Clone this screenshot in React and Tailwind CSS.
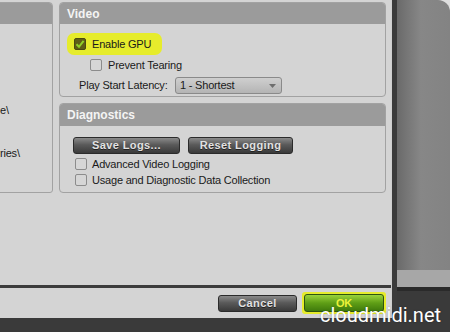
import React from "react";

const Checkbox = ({ checked }) => (
  <div
    className={
      checked
        ? "w-[12px] h-[12px] rounded-[2px] border border-[#4a4a12] bg-[#5e5e16] flex items-center justify-center shrink-0"
        : "w-[12px] h-[12px] rounded-[2px] border border-[#8c8c8c] bg-[#d6d6d6] shrink-0"
    }
  >
    {checked && (
      <svg width="10" height="10" viewBox="0 0 10 10">
        <path d="M1.5 5.2 L4 7.8 L8.6 1.8" fill="none" stroke="#8fd028" strokeWidth="2" />
      </svg>
    )}
  </div>
);

const DarkButton = ({ label, width }) => (
  <button
    className={`${width} h-[17px] rounded-[3px] border border-[#2b2b2b] bg-[linear-gradient(to_bottom,#8a8a8a,#5a5a5a_45%,#3a3a3a)] text-[#e2e2e2] text-[11px] font-bold tracking-[0.4px] leading-none flex items-center justify-center [text-shadow:0_1px_0_#222]`}
  >
    {label}
  </button>
);

const App = () => {
  return (
    <div className="relative w-[450px] h-[332px] overflow-hidden bg-[#3a3a3a] font-['Liberation_Sans',Arial,sans-serif] text-[11px] tracking-[-0.2px] text-[#1a1a1a]">
      <div className="flex h-[318px]">
        {/* Dialog */}
        <div className="w-[391px] flex flex-col bg-[#d4d4d4]">
          <div className="h-[285px] flex pt-[2px] overflow-hidden">
            {/* Left panel (cut off) */}
            <div className="-ml-[10px] w-[63px] h-[191px] shrink-0 border border-[#a2a2a2] rounded-tr-[4px] rounded-br-[3px] overflow-hidden flex flex-col">
              <div className="h-[21px] bg-[#9b9b9b]" />
              <div className="flex flex-col pl-[9px]">
                <span className="mt-[78px] leading-[16px] whitespace-nowrap">e\</span>
                <span className="mt-[27px] leading-[16px] whitespace-nowrap">ries\</span>
              </div>
            </div>

            {/* Right column */}
            <div className="ml-[6px] w-[327px] flex flex-col gap-[6px]">
              {/* Video */}
              <div className="h-[95px] border border-[#a2a2a2] rounded-[4px] overflow-hidden flex flex-col">
                <div className="h-[21px] bg-[#9b9b9b] flex items-center pl-[7px] text-[12px] font-bold tracking-normal text-[#f4f4f4]">
                  Video
                </div>
                <div className="flex flex-col">
                  <div className="ml-[7px] mt-[9px] w-[95px] h-[22px] rounded-[7px] bg-[#e6ec2c] flex items-center pl-[7px] gap-[6px]">
                    <Checkbox checked />
                    <span>Enable GPU</span>
                  </div>
                  <div className="mt-[2px] h-[16px] ml-[30px] flex items-center gap-[6px]">
                    <Checkbox />
                    <span>Prevent Tearing</span>
                  </div>
                  <div className="mt-[4px] h-[17px] ml-[19px] flex items-center">
                    <span className="w-[96px]">Play Start Latency:</span>
                    <div className="w-[107px] h-[17px] rounded-[3px] border border-[#8a8a8a] bg-[linear-gradient(to_bottom,#cfcfcf,#b4b4b4)] flex items-center justify-between pl-[4px] pr-[5px]">
                      <span>1 - Shortest</span>
                      <svg width="7" height="4" viewBox="0 0 7 4">
                        <path d="M0 0 H7 L3.5 4 Z" fill="#6e6e6e" />
                      </svg>
                    </div>
                  </div>
                </div>
              </div>

              {/* Diagnostics */}
              <div className="h-[90px] border border-[#a2a2a2] rounded-[4px] overflow-hidden flex flex-col">
                <div className="h-[22px] bg-[#9b9b9b] flex items-center pl-[7px] text-[12px] font-bold tracking-normal text-[#f4f4f4]">
                  Diagnostics
                </div>
                <div className="flex flex-col pt-[11px]">
                  <div className="flex gap-[8px] ml-[13px]">
                    <DarkButton label="Save Logs..." width="w-[107px]" />
                    <DarkButton label="Reset Logging" width="w-[105px]" />
                  </div>
                  <div className="mt-[2px] h-[16px] ml-[15px] flex items-center gap-[5px]">
                    <Checkbox />
                    <span>Advanced Video Logging</span>
                  </div>
                  <div className="h-[16px] ml-[15px] flex items-center gap-[5px]">
                    <Checkbox />
                    <span>Usage and Diagnostic Data Collection</span>
                  </div>
                </div>
              </div>
            </div>
          </div>
          <div className="h-[3px] bg-[#3c3c3c]" />
          {/* Button bar */}
          <div className="h-[30px] flex items-center justify-end pr-[5px]">
            <DarkButton label="Cancel" width="w-[79px]" />
            <div className="ml-[5px] p-[2px] rounded-[3px] bg-[#e6ec2c]">
              <button className="w-[80px] h-[18px] rounded-[3px] border border-[#2e5410] bg-[linear-gradient(to_bottom,#9ad43a,#5f9e16_50%,#3f7a0c)] text-[#eef23a] text-[11px] font-bold leading-none flex items-center justify-center">
                OK
              </button>
            </div>
          </div>
        </div>

        {/* Dark frame strip */}
        <div className="w-[6px] bg-[#3b3b3b] border-l border-[#cfcfcf]" />

        {/* Window behind */}
        <div className="flex-1 flex flex-col bg-[#dedede]">
          <div className="h-[270px] rounded-tr-[12px] bg-[linear-gradient(to_right,#6a6a6a,#878787_45%,#838383)]" />
          <div className="h-[17px] bg-[#a7a7a7]" />
          <div className="flex-1 bg-[#3a3a3a] border-t-[4px] border-[#2a2a2a]" />
        </div>
      </div>

      {/* Watermark */}
      <span className="absolute left-[320px] top-[305px] font-['Roboto',sans-serif] text-[20px] tracking-normal leading-none text-white [text-shadow:0_0_2px_rgba(0,0,0,0.3)]">
        cloudmidi.net
      </span>
    </div>
  );
};

export default App;
